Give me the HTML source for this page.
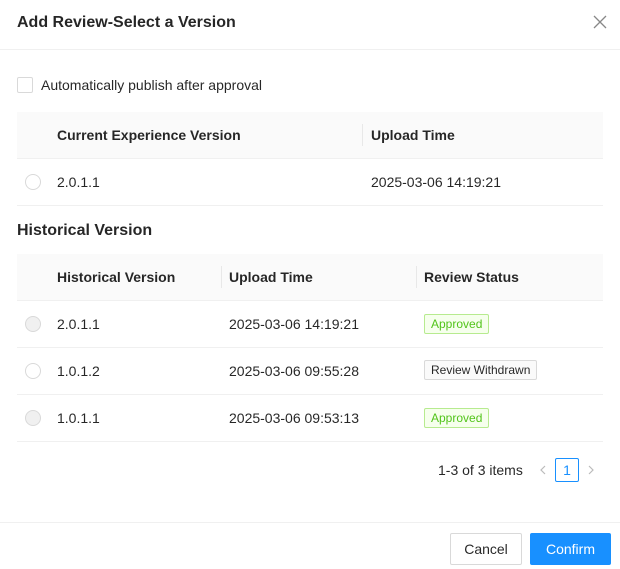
<!DOCTYPE html>
<html><head><style>
*{box-sizing:border-box;margin:0;padding:0}
body{width:620px;height:569px;background:#fff;font-family:"Liberation Sans",sans-serif;font-size:14px;color:rgba(0,0,0,.85);position:relative;overflow:hidden}
.a{position:absolute}
.t{line-height:20px}
.hd{background:#fafafa;font-weight:bold;color:rgba(0,0,0,.85)}
.line{height:1px;background:#f0f0f0}
.div{width:1px;height:22px;background:#e8e8e8}
.radio{width:16px;height:16px;border-radius:50%;border:1px solid #d9d9d9;background:#fff}
.radio.d{background:#f0f0f0}
.tag{font-size:12px;line-height:18px;padding:0 6px;border-radius:2px;border:1px solid}
.ok{color:#52c41a;background:#f6ffed;border-color:#b7eb8f}
.wd{color:rgba(0,0,0,.85);background:#fafafa;border-color:#d9d9d9}
</style></head><body>
<div class="a t" style="left:17px;top:13px;font-size:16px;font-weight:bold">Add Review-Select a Version</div>
<svg class="a" style="left:593px;top:15px" width="14" height="14" viewBox="0 0 14 14"><path d="M1 1L13 13M13 1L1 13" stroke="#888" stroke-width="1.3"/></svg>
<div class="a line" style="left:0;top:49px;width:620px"></div>

<div class="a" style="left:17px;top:77px;width:16px;height:16px;border:1px solid #d9d9d9;border-radius:2px"></div>
<div class="a t" style="left:41px;top:75px">Automatically publish after approval</div>

<div class="a hd" style="left:17px;top:112px;width:586px;height:46px"></div>
<div class="a t" style="left:57px;top:125px;font-weight:bold">Current Experience Version</div>
<div class="a div" style="left:362px;top:124px"></div>
<div class="a t" style="left:371px;top:125px;font-weight:bold">Upload Time</div>
<div class="a line" style="left:17px;top:158px;width:586px"></div>
<div class="a radio" style="left:25px;top:174px"></div>
<div class="a t" style="left:57px;top:172px">2.0.1.1</div>
<div class="a t" style="left:371px;top:172px">2025-03-06 14:19:21</div>
<div class="a line" style="left:17px;top:205px;width:586px"></div>

<div class="a t" style="left:17px;top:221px;font-size:16px;font-weight:bold">Historical Version</div>

<div class="a hd" style="left:17px;top:254px;width:586px;height:46px"></div>
<div class="a t" style="left:57px;top:267px;font-weight:bold">Historical Version</div>
<div class="a div" style="left:221px;top:266px"></div>
<div class="a t" style="left:229px;top:267px;font-weight:bold">Upload Time</div>
<div class="a div" style="left:416px;top:266px"></div>
<div class="a t" style="left:424px;top:267px;font-weight:bold">Review Status</div>
<div class="a line" style="left:17px;top:300px;width:586px"></div>

<div class="a radio d" style="left:25px;top:316px"></div>
<div class="a t" style="left:57px;top:314px">2.0.1.1</div>
<div class="a t" style="left:229px;top:314px">2025-03-06 14:19:21</div>
<div class="a tag ok" style="left:424px;top:314px">Approved</div>
<div class="a line" style="left:17px;top:347px;width:586px"></div>

<div class="a radio" style="left:25px;top:363px"></div>
<div class="a t" style="left:57px;top:361px">1.0.1.2</div>
<div class="a t" style="left:229px;top:361px">2025-03-06 09:55:28</div>
<div class="a tag wd" style="left:424px;top:360px">Review Withdrawn</div>
<div class="a line" style="left:17px;top:394px;width:586px"></div>

<div class="a radio d" style="left:25px;top:410px"></div>
<div class="a t" style="left:57px;top:408px">1.0.1.1</div>
<div class="a t" style="left:229px;top:408px">2025-03-06 09:53:13</div>
<div class="a tag ok" style="left:424px;top:408px">Approved</div>
<div class="a line" style="left:17px;top:441px;width:586px"></div>

<div class="a t" style="left:438px;top:460px">1-3 of 3 items</div>
<svg class="a" style="left:538px;top:465px" width="10" height="10"><path d="M7 1L3 5L7 9" fill="none" stroke="#bbb" stroke-width="1.2"/></svg>
<div class="a t" style="left:555px;top:458px;width:24px;height:24px;border:1px solid #1890ff;border-radius:2px;color:#1890ff;text-align:center;line-height:22px">1</div>
<svg class="a" style="left:586px;top:465px" width="10" height="10"><path d="M3 1L7 5L3 9" fill="none" stroke="#bbb" stroke-width="1.2"/></svg>

<div class="a line" style="left:0;top:522px;width:620px"></div>
<div class="a" style="left:450px;top:533px;width:72px;height:32px;border:1px solid #d9d9d9;border-radius:2px;text-align:center;line-height:30px">Cancel</div>
<div class="a" style="left:530px;top:533px;width:81px;height:32px;background:#1890ff;border-radius:2px;color:#fff;text-align:center;line-height:32px">Confirm</div>
</body></html>
